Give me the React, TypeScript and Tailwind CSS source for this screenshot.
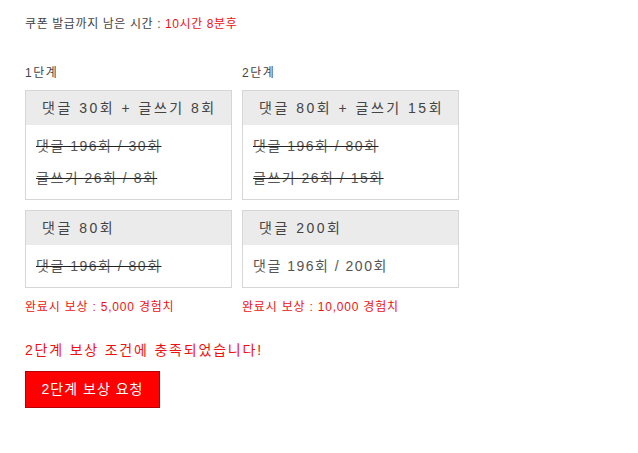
import React from "react";

const font = { fontFamily: '"Liberation Sans", "Noto Sans CJK KR", sans-serif' };

function Box({ w, title, lines }: { w: string; title: string; lines: { t: string; done: boolean }[] }) {
  return (
    <div className={`${w} border border-[#d6d6d6] bg-white`}>
      <div className="h-[34px] bg-[#ebebeb] pl-[16px] flex items-center text-[14px] tracking-[2.5px] text-[#444]">{title}</div>
      <div className="py-[5px] pl-[10px]">
        {lines.map((l, i) => (
          <div key={i} className="h-[32px] flex items-center">
            <span className={`text-[14px] tracking-[1.5px] text-[#555] ${l.done ? "line-through decoration-[#222]" : ""}`}>{l.t}</span>
          </div>
        ))}
      </div>
    </div>
  );
}

export default function App() {
  return (
    <div className="bg-white min-h-[453px] pl-[25px] pt-[15px]" style={font}>
      <div className="text-[12px] leading-[18px] tracking-[0.6px] text-[#444]">
        쿠폰 발급까지 남은 시간 : <span className="text-[#ee1111]">10시간 8분후</span>
      </div>
      <div className="mt-[31px] flex gap-[10px]">
        <div className="flex flex-col">
          <div className="text-[12px] leading-[18px] tracking-[1.5px] text-[#444] mb-[8px]">1단계</div>
          <Box
            w="w-[207px]"
            title="댓글 30회 + 글쓰기 8회"
            lines={[
              { t: "댓글 196회 / 30회", done: true },
              { t: "글쓰기 26회 / 8회", done: true },
            ]}
          />
          <div className="mt-[10px]">
            <Box w="w-[207px]" title="댓글 80회" lines={[{ t: "댓글 196회 / 80회", done: true }]} />
          </div>
          <div className="mt-[10px] text-[12px] leading-[18px] tracking-[0.8px] text-[#ee1111]">완료시 보상 : 5,000 경험치</div>
        </div>
        <div className="flex flex-col">
          <div className="text-[12px] leading-[18px] tracking-[1.5px] text-[#444] mb-[8px]">2단계</div>
          <Box
            w="w-[217px]"
            title="댓글 80회 + 글쓰기 15회"
            lines={[
              { t: "댓글 196회 / 80회", done: true },
              { t: "글쓰기 26회 / 15회", done: true },
            ]}
          />
          <div className="mt-[10px]">
            <Box w="w-[217px]" title="댓글 200회" lines={[{ t: "댓글 196회 / 200회", done: false }]} />
          </div>
          <div className="mt-[10px] text-[12px] leading-[18px] tracking-[0.8px] text-[#ee1111]">완료시 보상 : 10,000 경험치</div>
        </div>
      </div>
      <div className="mt-[24px] text-[14px] leading-[20px] tracking-[1.8px] text-[#ee1111]">2단계 보상 조건에 충족되었습니다!</div>
      <button className="mt-[11px] w-[135px] h-[37px] bg-[#ff0000] border border-[#b80000] text-white text-[14px] tracking-[1px] flex items-center justify-center">
        2단계 보상 요청
      </button>
    </div>
  );
}
